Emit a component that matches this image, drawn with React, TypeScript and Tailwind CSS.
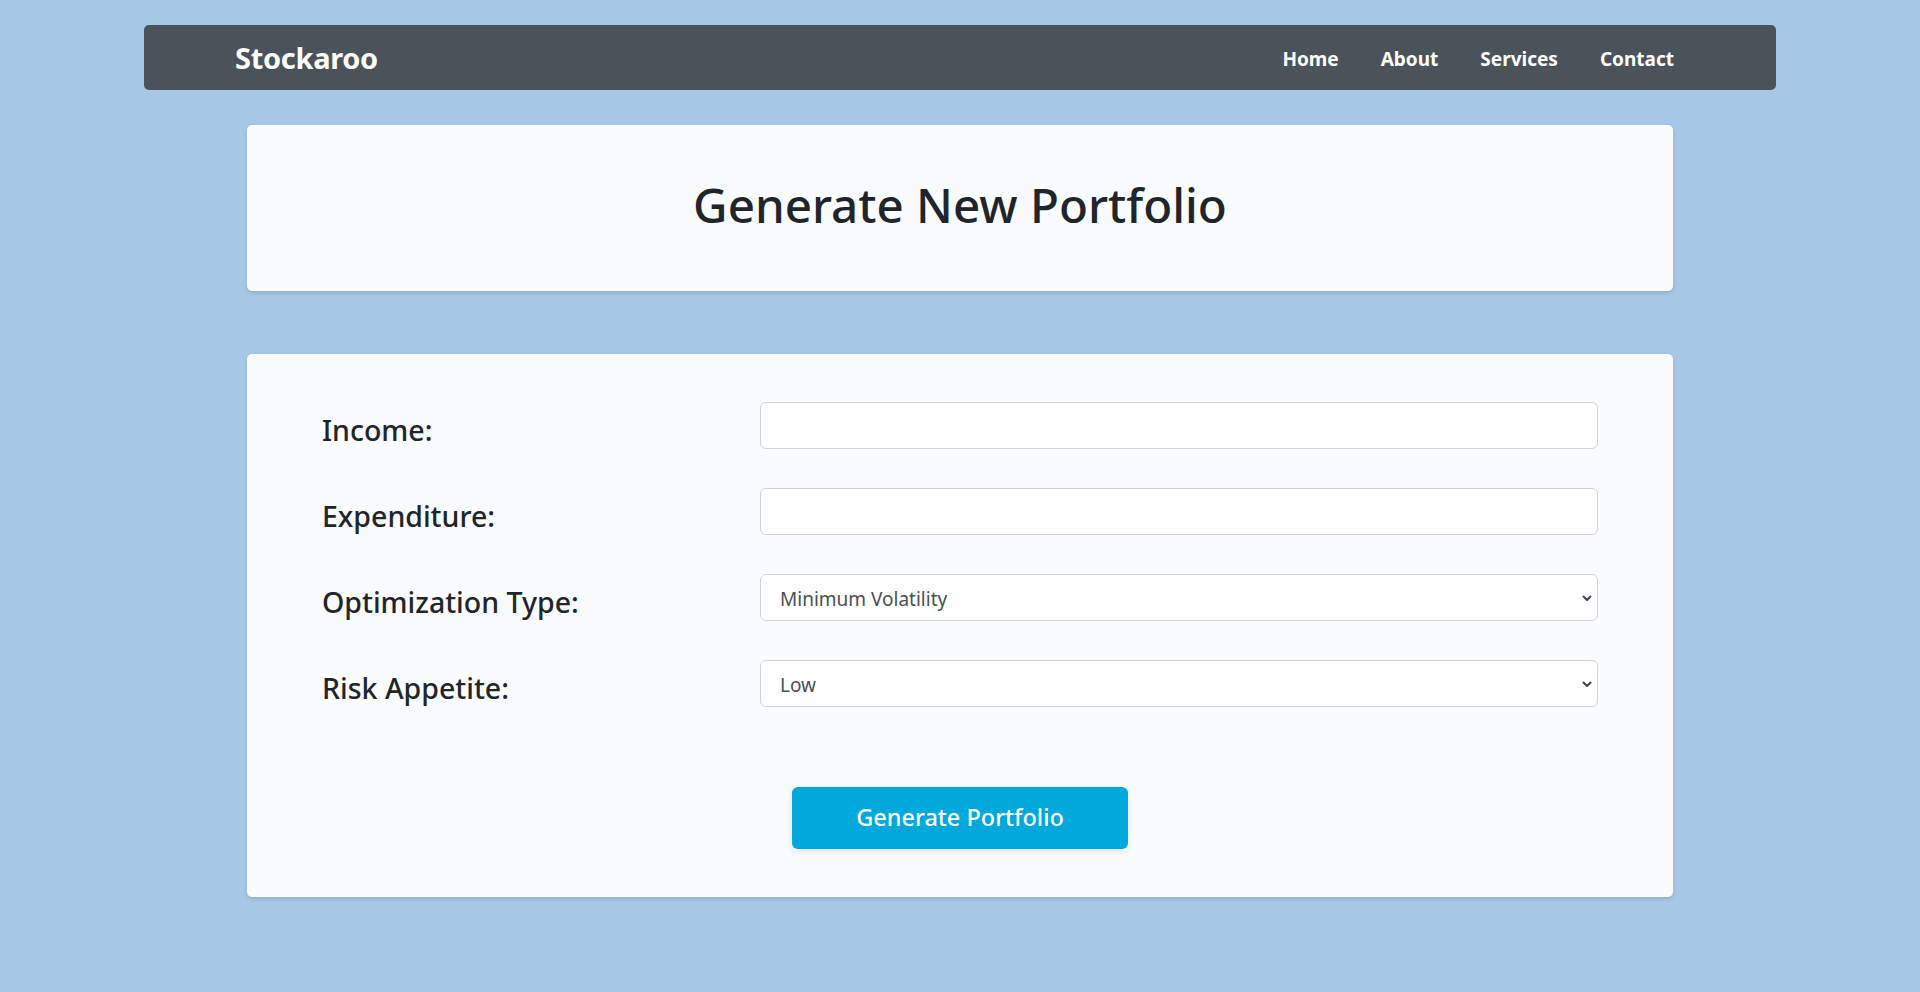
const links = ["Home", "About", "Services", "Contact"];

const Chevron = () => (
  <svg
    className="pointer-events-none absolute right-[5px] top-1/2 -translate-y-1/2"
    width="12"
    height="12"
    viewBox="0 0 12 12"
    fill="none"
  >
    <path d="M2.5 4.5 6 8l3.5-3.5" stroke="#3f454b" strokeWidth="2" strokeLinecap="round" strokeLinejoin="round" />
  </svg>
);

const Field = ({ label, children }: { label: string; children: React.ReactNode }) => (
  <div className="flex items-center h-[47px] mb-[39px]">
    <label className="w-[438px] pt-[9px] text-[28.5px] font-medium text-[#212529]">{label}</label>
    <div className="flex-1">{children}</div>
  </div>
);

const inputCls =
  "w-full h-[47px] rounded-[6px] border border-[#ced4da] bg-white pl-[19px] pr-[16px] pt-[3px] text-[19px] text-[#495057] outline-none";

export default function App() {
  return (
    <div
      className="min-h-screen bg-[#a6c7e6] pt-[25px]"
      style={{ fontFamily: '"Noto Sans", "Open Sans", sans-serif' }}
    >
      <nav className="mx-auto w-[1632px] h-[65px] rounded-[5px] bg-[#4b535a] flex items-center justify-between pl-[91px] pr-[102px]">
        <span className="text-[29px] font-bold text-white tracking-[-0.3px]">Stockaroo</span>
        <div className="flex gap-[42px] pt-[3px]">
          {links.map((l) => (
            <a key={l} href="#" className="text-[19px] font-bold text-white">
              {l}
            </a>
          ))}
        </div>
      </nav>

      <section className="mx-auto mt-[35px] w-[1426px] h-[166px] rounded-[5px] bg-[#f9fbfd] shadow-[0_2px_4px_rgba(0,0,0,0.12)] flex items-center justify-center">
        <h1 className="text-[47.5px] font-medium text-[#212529] pb-[6px]">Generate New Portfolio</h1>
      </section>

      <section className="mx-auto mt-[63px] w-[1426px] rounded-[5px] bg-[#f9fbfd] shadow-[0_2px_4px_rgba(0,0,0,0.12)] px-[75px] pt-[48px] pb-[48px]">
        <Field label="Income:">
          <input type="text" className={inputCls} />
        </Field>
        <Field label="Expenditure:">
          <input type="text" className={inputCls} />
        </Field>
        <Field label="Optimization Type:">
          <div className="relative">
            <select className={inputCls + " appearance-none"} defaultValue="minvol">
              <option value="minvol">Minimum Volatility</option>
              <option value="maxsharpe">Maximum Sharpe Ratio</option>
            </select>
            <Chevron />
          </div>
        </Field>
        <Field label="Risk Appetite:">
          <div className="relative">
            <select className={inputCls + " appearance-none"} defaultValue="low">
              <option value="low">Low</option>
              <option value="medium">Medium</option>
              <option value="high">High</option>
            </select>
            <Chevron />
          </div>
        </Field>
        <div className="flex justify-center pt-[41px]">
          <button className="w-[336px] h-[62px] rounded-[6px] bg-[#00a8dc] text-white text-[23.5px] font-medium shadow-[0_3px_6px_rgba(0,0,0,0.08)]">
            Generate Portfolio
          </button>
        </div>
      </section>
    </div>
  );
}
